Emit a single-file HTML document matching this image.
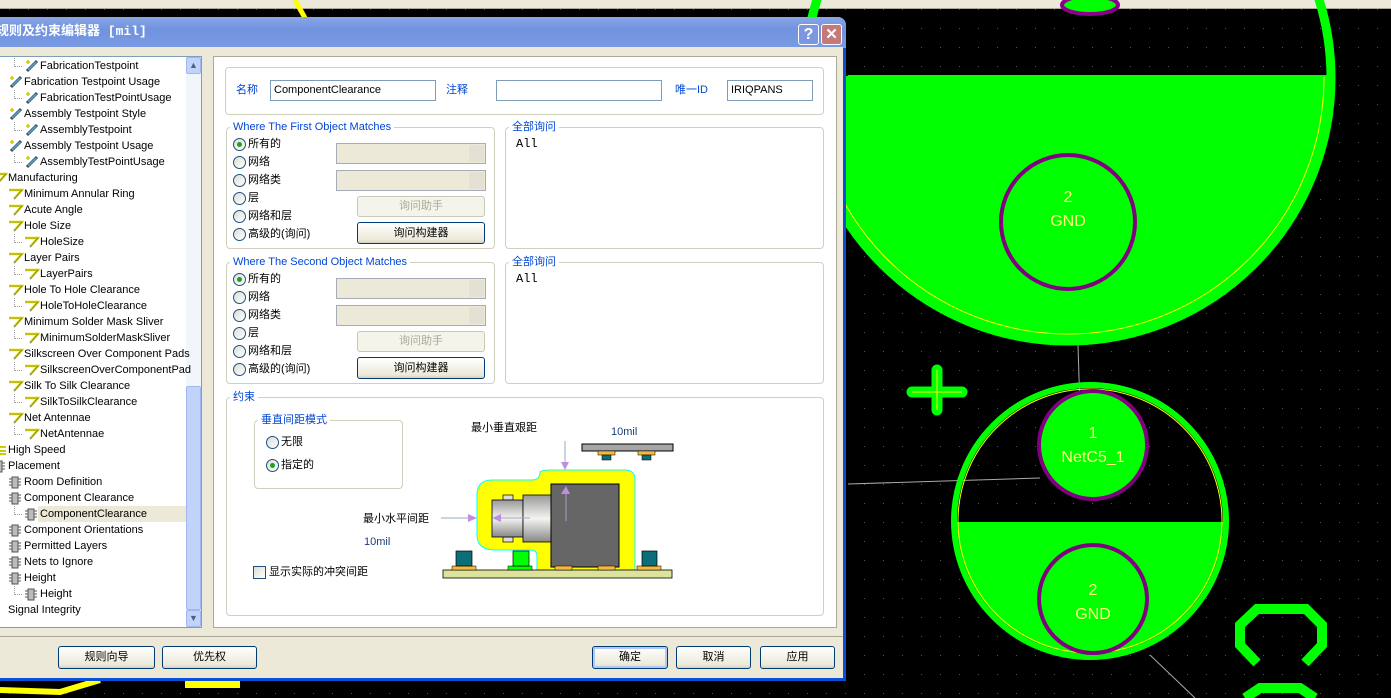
<!DOCTYPE html>
<html><head><meta charset="utf-8"><style>
*{margin:0;padding:0;box-sizing:border-box}
body{width:1391px;height:698px;overflow:hidden;position:relative;background:#000;font-family:"Liberation Sans","Noto Sans CJK SC",sans-serif;font-size:11px;color:#000}
.a{position:absolute}
.t{position:absolute;white-space:nowrap;line-height:16px}
.blue{color:#0046d5}
.gb{position:absolute;border:1px solid #d0d0bf;border-radius:4px}
.gl{position:absolute;background:#fff;padding:0 3px;color:#0046d5;line-height:14px;white-space:nowrap}
.inp{position:absolute;border:1px solid #7f9db9;background:#fff;height:21px;padding-left:3px;line-height:19px}
.dd{position:absolute;border:1px solid #a5acb5;background:#ece9d8;height:21px}
.dd:after{content:"";position:absolute;right:1px;top:1px;width:15px;height:17px;background:#e4e1d4}
.rb{position:absolute;width:13px;height:13px;border:1px solid #1c5180;border-radius:50%;background:linear-gradient(135deg,#dcdcd4,#fff)}
.rb.on:after{content:"";position:absolute;left:3px;top:3px;width:5px;height:5px;border-radius:50%;background:#21a121}
.btn{position:absolute;border:1px solid #003c74;border-radius:3px;background:linear-gradient(#fff,#ece9d8 85%,#d6d0c5);text-align:center;line-height:21px;height:23px}
.btn.dis{border-color:#c9c7ba;color:#aca899;background:#f5f4ea}
.ic{position:absolute;width:14px;height:12px}
</style></head><body>
<!-- PCB background -->
<svg class="a" style="left:0;top:0" width="1391" height="698">
<defs><pattern id="dots" width="19" height="19" patternUnits="userSpaceOnUse"><rect x="9" y="9" width="1" height="1" fill="#555"/></pattern>
<clipPath id="c1"><rect x="0" y="76" width="1391" height="700"/></clipPath>
<clipPath id="c2"><rect x="0" y="522" width="1391" height="300"/></clipPath></defs>
<rect width="1391" height="698" fill="url(#dots)"/>
<rect x="0" y="0" width="1391" height="8" fill="#ece9d8"/>
<rect x="0" y="8" width="1391" height="1" fill="#aca899"/>
<path d="M295 0 L305 18" stroke="#ff0" stroke-width="5"/>
<ellipse cx="1090" cy="5" rx="28" ry="9" fill="#00ff00" stroke="#8b008b" stroke-width="4"/>
<!-- big circle -->
<circle cx="1068" cy="78" r="263" fill="none" stroke="#00ff00" stroke-width="9"/>
<circle cx="1068" cy="78" r="259" fill="#00ff00" clip-path="url(#c1)"/>
<circle cx="1068" cy="78" r="256" fill="none" stroke="#ff0" stroke-width="1" clip-path="url(#c1)"/>
<line x1="848" y1="76" x2="1332" y2="76" stroke="#00ff00" stroke-width="2"/>
<circle cx="1068" cy="222" r="67" fill="#00ff00" stroke="#800080" stroke-width="4"/>
<text x="1068" y="202" fill="#ffff80" font-size="16" text-anchor="middle">2</text>
<text x="1068" y="226" fill="#ffff80" font-size="16" text-anchor="middle">GND</text>
<line x1="1078" y1="345" x2="1080" y2="410" stroke="#aaa" stroke-width="1"/>
<line x1="848" y1="484" x2="1040" y2="478" stroke="#aaa" stroke-width="1"/>
<line x1="1150" y1="655" x2="1195" y2="698" stroke="#aaa" stroke-width="1"/>
<!-- cross -->
<path d="M937 370 V410 M912 392 H962" stroke="#00ff00" stroke-width="11" stroke-linecap="round"/>
<path d="M937 370 V410 M912 392 H962" stroke="#ff0" stroke-width="1"/>
<!-- lower circle -->
<circle cx="1090" cy="521" r="136" fill="none" stroke="#00ff00" stroke-width="6"/>
<circle cx="1090" cy="521" r="133" fill="#00ff00" clip-path="url(#c2)"/>
<circle cx="1090" cy="521" r="132" fill="none" stroke="#ff0" stroke-width="1"/>
<circle cx="1093" cy="445" r="54" fill="#00ff00" stroke="#800080" stroke-width="4"/>
<text x="1093" y="438" fill="#ffff80" font-size="16" text-anchor="middle">1</text>
<text x="1093" y="462" fill="#ffff80" font-size="16" text-anchor="middle">NetC5_1</text>
<circle cx="1093" cy="599" r="54" fill="#00ff00" stroke="#800080" stroke-width="4"/>
<text x="1093" y="595" fill="#ffff80" font-size="16" text-anchor="middle">2</text>
<text x="1093" y="619" fill="#ffff80" font-size="16" text-anchor="middle">GND</text>
<path d="M1257 663 L1240 645 V625 L1257 609 H1306 L1322 625 V645 L1305 663" fill="none" stroke="#00ff00" stroke-width="10"/>
<path d="M1245 698 L1260 688 H1300 L1315 698" fill="none" stroke="#00ff00" stroke-width="10"/>
<path d="M0 690 L60 692 L100 680" fill="none" stroke="#ff0" stroke-width="6"/>
<rect x="185" y="680" width="55" height="8" fill="#ff0"/>
</svg>

<!-- dialog -->
<div class="a" style="left:0;top:17px;width:846px;height:664px;background:#0a4fd8;border-radius:0 8px 0 0"></div>
<div class="a" style="left:0;top:17px;width:846px;height:31px;border-radius:0 8px 0 0;background:linear-gradient(#8aa6e6,#7093df 40%,#7a9ae3)"></div>
<div class="t" style="left:-4px;top:24px;color:#fff;font-weight:bold;font-size:13px;font-family:'Liberation Mono','Noto Sans CJK SC',monospace">规则及约束编辑器 [mil]</div>
<div class="a" style="left:798px;top:24px;width:21px;height:21px;border:1px solid #fff;border-radius:3px;background:#7a97e0;color:#fff;text-align:center;font-size:16px;line-height:19px;font-weight:bold">?</div>
<div class="a" style="left:821px;top:24px;width:21px;height:21px;border:1px solid #fff;border-radius:3px;background:#c47a7a;color:#fff;text-align:center;font-size:15px;line-height:19px;font-weight:bold">✕</div>
<div class="a" style="left:0;top:47px;width:843px;height:631px;background:#ece9d8"></div>

<!-- tree -->
<div class="a" style="left:0;top:56px;width:202px;height:572px;background:#fff;border:1px solid #7f9db9;border-left:none"></div>
<div class="a" style="left:186px;top:57px;width:15px;height:570px;background:#f3f5fc"></div>
<div class="a" style="left:186px;top:57px;width:15px;height:17px;background:#c1d3fb;border:1px solid #a0b8ef;border-radius:2px;font-size:9px;color:#4d6185;text-align:center;line-height:14px">▲</div>
<div class="a" style="left:186px;top:386px;width:15px;height:224px;background:#c1d3fb;border:1px solid #a0b8ef;border-radius:2px"></div>
<div class="a" style="left:186px;top:610px;width:15px;height:17px;background:#c1d3fb;border:1px solid #a0b8ef;border-radius:2px;font-size:9px;color:#4d6185;text-align:center;line-height:14px">▼</div>
<div class="a" style="left:38px;top:506px;width:148px;height:16px;background:#ece9d8"></div>
<div id="tree"></div>

<!-- right panel -->
<div class="a" style="left:213px;top:56px;width:624px;height:572px;background:#fff;border:1px solid #aca899"></div>
<div class="gb" style="left:225px;top:67px;width:599px;height:48px"></div>
<div class="t blue" style="left:236px;top:82px">名称</div>
<div class="inp" style="left:270px;top:80px;width:166px">ComponentClearance</div>
<div class="t blue" style="left:446px;top:82px">注释</div>
<div class="inp" style="left:496px;top:80px;width:166px"></div>
<div class="t blue" style="left:675px;top:82px">唯一ID</div>
<div class="inp" style="left:727px;top:80px;width:86px">IRIQPANS</div>

<div id="groups"></div>

<div class="gb" style="left:226px;top:397px;width:598px;height:219px"></div>
<div class="gl" style="left:230px;top:390px">约束</div>
<div class="gb" style="left:254px;top:420px;width:149px;height:69px"></div>
<div class="gl" style="left:258px;top:413px">垂直间距模式</div>
<div class="rb" style="left:266px;top:436px"></div><div class="t" style="left:281px;top:434px">无限</div>
<div class="rb on" style="left:266px;top:459px"></div><div class="t" style="left:281px;top:457px">指定的</div>
<div class="a" style="left:253px;top:566px;width:13px;height:13px;border:1px solid #1c5180;background:linear-gradient(135deg,#dcdcd4,#fff)"></div>
<div class="t" style="left:269px;top:564px">显示实际的冲突间距</div>

<svg class="a" style="left:440px;top:440px" width="240" height="145">
<g transform="translate(-440,-440)">
<rect x="582" y="444" width="91" height="7" fill="#a6a6a6" stroke="#000" stroke-width="1"/>
<rect x="598" y="451" width="17" height="4" fill="#f6b93a" stroke="#000" stroke-width=".5"/>
<rect x="602" y="455" width="9" height="5" fill="#0a6f78" stroke="#000" stroke-width=".5"/>
<rect x="638" y="451" width="17" height="4" fill="#f6b93a" stroke="#000" stroke-width=".5"/>
<rect x="642" y="455" width="9" height="5" fill="#0a6f78" stroke="#000" stroke-width=".5"/>
<path d="M477 495 Q477 480 492 480 L532 480 Q540 480 540 472 Q542 470 550 470 L625 470 Q635 470 635 480 L635 570 L537 570 L537 556 Q537 550 530 550 L495 550 Q477 550 477 535 Z" fill="#ff0" stroke="#0ff" stroke-width="1"/>
<defs><linearGradient id="cy" x1="0" y1="0" x2="0" y2="1"><stop offset="0" stop-color="#999"/><stop offset=".5" stop-color="#f4f4f0"/><stop offset="1" stop-color="#888"/></linearGradient></defs>
<rect x="503" y="495" width="10" height="5" fill="#ddd" stroke="#000" stroke-width=".7"/>
<rect x="503" y="537" width="10" height="5" fill="#ddd" stroke="#000" stroke-width=".7"/>
<rect x="492" y="500" width="31" height="37" fill="url(#cy)" stroke="#000" stroke-width=".8"/>
<rect x="523" y="495" width="28" height="47" fill="url(#cy)" stroke="#000" stroke-width=".8"/>
<rect x="551" y="484" width="68" height="83" fill="#666" stroke="#000" stroke-width="1"/>
<rect x="443" y="570" width="229" height="8" fill="#dde39a" stroke="#000" stroke-width=".8"/>
<rect x="452" y="566" width="24" height="4" fill="#f6b93a" stroke="#000" stroke-width=".5"/>
<rect x="456" y="551" width="16" height="15" fill="#0a6f78" stroke="#000" stroke-width=".7"/>
<rect x="508" y="566" width="24" height="4" fill="#0f0" stroke="#000" stroke-width=".5"/>
<rect x="513" y="551" width="16" height="15" fill="#0f0" stroke="#000" stroke-width=".7"/>
<rect x="555" y="566" width="17" height="4" fill="#f6b93a" stroke="#000" stroke-width=".5"/>
<rect x="598" y="566" width="17" height="4" fill="#f6b93a" stroke="#000" stroke-width=".5"/>
<rect x="637" y="566" width="24" height="4" fill="#f6b93a" stroke="#000" stroke-width=".5"/>
<rect x="642" y="551" width="15" height="15" fill="#0a6f78" stroke="#000" stroke-width=".7"/>
<path d="M565 441 V463 M441 518 H470 M530 518 H501 M566 521 V494" stroke="#9aa7c7" stroke-width="1"/>
<path d="M561 462 H569 L565 470 Z M468 514 V522 L477 518 Z M501 514 V522 L492 518 Z M561 494 H570 L566 486 Z" fill="#c08ee0"/>
</g></svg>
<div class="t" style="left:471px;top:420px">最小垂直艰距</div>
<div class="t" style="left:611px;top:424px;color:#1a3d78">10mil</div>
<div class="t" style="left:363px;top:511px">最小水平间距</div>
<div class="t" style="left:364px;top:534px;color:#1a3d78">10mil</div>

<!-- bottom buttons -->
<div class="a" style="left:0;top:636px;width:843px;height:1px;background:#aca899"></div>
<div class="btn" style="left:58px;top:646px;width:97px">规则向导</div>
<div class="btn" style="left:162px;top:646px;width:95px">优先权</div>
<div class="btn" style="left:592px;top:646px;width:76px;box-shadow:inset 0 0 0 2px #b4c8f6">确定</div>
<div class="btn" style="left:676px;top:646px;width:75px">取消</div>
<div class="btn" style="left:760px;top:646px;width:75px">应用</div>

<script>
var items=[["FabricationTestpoint",2,"t"],["Fabrication Testpoint Usage",1,"t"],["FabricationTestPointUsage",2,"t"],["Assembly Testpoint Style",1,"t"],["AssemblyTestpoint",2,"t"],["Assembly Testpoint Usage",1,"t"],["AssemblyTestPointUsage",2,"t"],["Manufacturing",0,"m"],["Minimum Annular Ring",1,"m"],["Acute Angle",1,"m"],["Hole Size",1,"m"],["HoleSize",2,"m"],["Layer Pairs",1,"m"],["LayerPairs",2,"m"],["Hole To Hole Clearance",1,"m"],["HoleToHoleClearance",2,"m"],["Minimum Solder Mask Sliver",1,"m"],["MinimumSolderMaskSliver",2,"m"],["Silkscreen Over Component Pads",1,"m"],["SilkscreenOverComponentPad",2,"m"],["Silk To Silk Clearance",1,"m"],["SilkToSilkClearance",2,"m"],["Net Antennae",1,"m"],["NetAntennae",2,"m"],["High Speed",0,"h"],["Placement",0,"p"],["Room Definition",1,"p"],["Component Clearance",1,"p"],["ComponentClearance",2,"p"],["Component Orientations",1,"p"],["Permitted Layers",1,"p"],["Nets to Ignore",1,"p"],["Height",1,"p"],["Height",2,"p"],["Signal Integrity",0,"s"]];
var h="";
items.forEach(function(it,i){var y=58+i*16;var lv=it[1];var tx=[8,24,40][lv];var ix=tx-16;
if(lv==2)h+='<div class="a" style="left:14px;top:'+(y)+'px;width:8px;height:9px;border-left:1px dotted #999;border-bottom:1px dotted #999"></div>';
var ic;
if(it[2]=="t")ic='<svg class="a" style="left:'+ix+'px;top:'+(y+1)+'px" width="16" height="14"><path d="M3 12 L13 2" stroke="#445" stroke-width="3"/><path d="M4 11 L12 3" stroke="#4ab0d8" stroke-width="1.5"/><path d="M2 3 H6 M4 1 V5" stroke="#cc0" stroke-width="1.5"/></svg>';
else if(it[2]=="m")ic='<svg class="a" style="left:'+ix+'px;top:'+(y+2)+'px" width="16" height="12"><path d="M1 2 H14 L6 11" fill="none" stroke="#dd0" stroke-width="2.5"/><path d="M1 2 H14 L6 11" fill="none" stroke="#666" stroke-width=".6"/></svg>';
else if(it[2]=="p")ic='<svg class="a" style="left:'+ix+'px;top:'+(y+2)+'px" width="16" height="13"><rect x="4" y="1" width="6" height="11" fill="#bbb" stroke="#555"/><path d="M1 3H4M1 6H4M1 9H4M10 3H13M10 6H13M10 9H13" stroke="#555"/></svg>';
else if(it[2]=="h")ic='<svg class="a" style="left:'+ix+'px;top:'+(y+3)+'px" width="16" height="11"><path d="M8 2H14M8 6H14M8 9H14" stroke="#cc0" stroke-width="2"/></svg>';
else ic='';
h+=ic+'<div class="t" style="left:'+tx+'px;top:'+y+'px">'+it[0]+'</div>';});
document.getElementById("tree").innerHTML=h;
var g="";
[[127,"Where The First Object Matches"],[262,"Where The Second Object Matches"]].forEach(function(q){var y=q[0];
g+='<div class="gb" style="left:226px;top:'+y+'px;width:269px;height:122px"></div><div class="gl" style="left:230px;top:'+(y-7)+'px">'+q[1]+'</div>';
g+='<div class="gb" style="left:505px;top:'+y+'px;width:319px;height:122px"></div><div class="gl" style="left:509px;top:'+(y-7)+'px">全部询问</div>';
g+='<div class="t" style="left:516px;top:'+(y+9)+'px;font-family:\'Liberation Mono\',monospace;font-size:12px">All</div>';
["所有的","网络","网络类","层","网络和层","高级的(询问)"].forEach(function(s,i){var yy=y+11+i*18;g+='<div class="rb'+(i==0?' on':'')+'" style="left:233px;top:'+yy+'px"></div><div class="t" style="left:248px;top:'+(yy-2)+'px">'+s+'</div>';});
g+='<div class="dd" style="left:336px;top:'+(y+16)+'px;width:150px"></div><div class="dd" style="left:336px;top:'+(y+43)+'px;width:150px"></div>';
g+='<div class="btn dis" style="left:357px;top:'+(y+69)+'px;width:128px;height:21px;line-height:19px">询问助手</div>';
g+='<div class="btn" style="left:357px;top:'+(y+95)+'px;width:128px;height:22px;line-height:20px">询问构建器</div>';});
document.getElementById("groups").innerHTML=g;
</script>
</body></html>
